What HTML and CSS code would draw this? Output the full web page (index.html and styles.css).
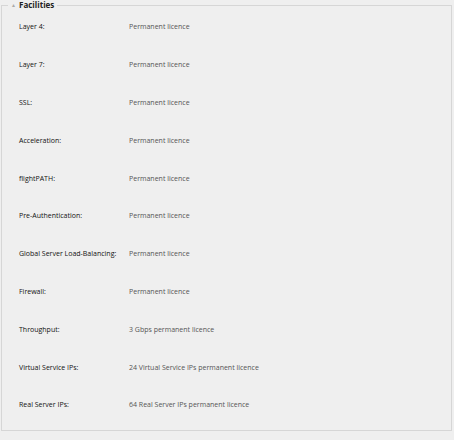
FILE: index.html
```html
<!DOCTYPE html>
<html lang="en">
<head>
    <meta charset="UTF-8">
    <title>Facilities</title>
    <link rel="stylesheet" href="styles.css">
</head>
<body>

<fieldset class="facilities">
    <legend><span class="toggle">&#9650;</span> Facilities</legend>
    <div class="row"><span class="label">Layer 4:</span><span class="value">Permanent licence</span></div>
    <div class="row"><span class="label">Layer 7:</span><span class="value">Permanent licence</span></div>
    <div class="row"><span class="label">SSL:</span><span class="value">Permanent licence</span></div>
    <div class="row"><span class="label">Acceleration:</span><span class="value">Permanent licence</span></div>
    <div class="row"><span class="label">flightPATH:</span><span class="value">Permanent licence</span></div>
    <div class="row"><span class="label">Pre-Authentication:</span><span class="value">Permanent licence</span></div>
    <div class="row"><span class="label">Global Server Load-Balancing:</span><span class="value">Permanent licence</span></div>
    <div class="row"><span class="label">Firewall:</span><span class="value">Permanent licence</span></div>
    <div class="row"><span class="label">Throughput:</span><span class="value">3 Gbps permanent licence</span></div>
    <div class="row"><span class="label">Virtual Service IPs:</span><span class="value">24 Virtual Service IPs permanent licence</span></div>
    <div class="row"><span class="label">Real Server IPs:</span><span class="value">64 Real Server IPs permanent licence</span></div>
</fieldset>

</body>
</html>
```

FILE: styles.css
```css
body {
    font-family: "Open Sans", Arial, sans-serif;
    margin: 0;
    padding: 0;
    background-color: #efefef;
    color: #222;
}

.facilities {
    margin: 0 2px 0 1px;
    padding: 0 0 12px 0;
    border: 1px solid #d6d6d6;
    height: 431px;
    box-sizing: border-box;
}

.facilities legend {
    font-size: 8px;
    font-weight: bold;
    line-height: 9px;
    padding: 0 3px;
    margin-left: 6px;
    color: #222;
}

.toggle {
    font-size: 5px;
    color: #aaa;
    vertical-align: 1px;
    margin-right: 1px;
}

.row {
    display: flex;
    align-items: center;
    height: 37.8px;
    font-size: 7px;
}

.row:first-of-type {
    margin-top: -2px;
}

.label {
    width: 110px;
    padding-left: 17px;
    font-weight: 500;
    color: #111;
}

.value {
    color: #555;
}
```
